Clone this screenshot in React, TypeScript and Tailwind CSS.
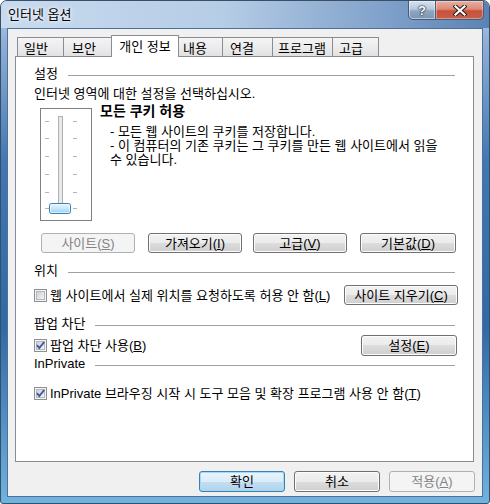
import React from "react";

type Kind = "normal" | "primary" | "disabled";

function Button({
  children,
  kind = "normal",
  className = "",
}: {
  children: React.ReactNode;
  kind?: Kind;
  className?: string;
}) {
  const look: Record<Kind, string> = {
    normal:
      "border-[#707070] bg-[linear-gradient(#f2f2f2,#ebebeb_50%,#dddddd_50%,#cfcfcf)] text-black shadow-[inset_0_0_0_1px_#fcfcfc]",
    primary:
      "border-[#3c7fb1] bg-[linear-gradient(#eaf4fb,#dcecf8_50%,#c4def2_50%,#b2d3ec)] text-black shadow-[inset_0_0_0_1px_#9fdcf5]",
    disabled: "border-[#adb2b5] bg-[#f4f4f4] text-[#838383]",
  };
  return (
    <div
      className={`flex items-center justify-center rounded-[3px] border ${look[kind]} ${className}`}
    >
      {children}
    </div>
  );
}

function Checkbox({ checked = false }: { checked?: boolean }) {
  return (
    <svg width="13" height="13" viewBox="0 0 13 13" className="shrink-0">
      <defs>
        <linearGradient id="cbg" x1="0" y1="0" x2="1" y2="1">
          <stop offset="0" stopColor="#cbcfd5" />
          <stop offset="1" stopColor="#f6f6f6" />
        </linearGradient>
      </defs>
      <rect x="0.5" y="0.5" width="12" height="12" fill="#f4f4f4" stroke="#8e8f8f" />
      <rect x="2.5" y="2.5" width="8" height="8" fill="url(#cbg)" stroke="#b4b8bd" />
      {checked && (
        <path d="M3 6.2 L5.3 9 L10.2 3" fill="none" stroke="#3d5aa0" strokeWidth="1.9" />
      )}
    </svg>
  );
}

function GroupHeader({ label }: { label: string }) {
  return (
    <div className="flex items-center h-[15px]">
      <span>{label}</span>
      <div className="ml-[10px] mr-[3px] mt-[3px] h-px flex-1 bg-[#a0a0a0]" />
    </div>
  );
}

function PrivacySlider() {
  const ticks = [13, 30, 48, 66, 84, 100];
  return (
    <svg width="52" height="113" viewBox="0 0 52 113" className="shrink-0">
      <defs>
        <linearGradient id="thumb" x1="0" y1="0" x2="0" y2="1">
          <stop offset="0" stopColor="#e9f6fd" />
          <stop offset="0.5" stopColor="#c5e8fa" />
          <stop offset="1" stopColor="#8fd0f3" />
        </linearGradient>
      </defs>
      <rect
        x="0.5"
        y="0.5"
        width="51"
        height="112"
        fill="none"
        stroke="#000"
        strokeDasharray="1 1"
      />
      <rect x="18.5" y="8.5" width="4" height="90" fill="#e7eaea" stroke="#b0b0b0" />
      {ticks.map((y) => (
        <g key={y}>
          <line x1="5" y1={y + 0.5} x2="9" y2={y + 0.5} stroke="#b5b5b5" />
          <line x1="33" y1={y + 0.5} x2="37" y2={y + 0.5} stroke="#b5b5b5" />
        </g>
      ))}
      <rect
        x="9.5"
        y="95.5"
        width="21"
        height="10"
        rx="2"
        fill="url(#thumb)"
        stroke="#3c7fb1"
      />
      <rect x="10.5" y="96.5" width="19" height="8" rx="1" fill="none" stroke="#f4fbff" strokeOpacity="0.7" />
    </svg>
  );
}

function Tab({
  label,
  className,
}: {
  label: string;
  className: string;
}) {
  return (
    <div
      className={`flex h-[19px] items-center border border-b-0 border-[#898c95] bg-[linear-gradient(#f4f4f4,#ececec_50%,#e1e1e1)] pt-[2px] ${className}`}
    >
      {label}
    </div>
  );
}

export default function App() {
  return (
    <div className="w-[490px] h-[504px] [font-family:'Liberation_Sans','Noto_Sans_CJK_KR',sans-serif] text-[13px] leading-[15px] text-black">
      <div className="flex h-full w-full flex-col rounded-t-[7px] rounded-b-[3px] border border-[#3b4e66] bg-[linear-gradient(180deg,#b9cfe7_0px,#8fb0d6_40px,#3f78b3_160px,#2f6aa6_65%,#6fb3e0_100%)] px-[6px] pb-[6px]">
        {/* title bar */}
        <div className="-mx-[6px] flex h-[27px] items-start rounded-t-[6px] bg-[linear-gradient(90deg,#c8daee_0%,#b6cde6_45%,#7d9fc9_80%,#5a83b5_100%)] pl-[7px] pr-[5px]">
          <span className="self-center [text-shadow:0_0_6px_#fff,0_0_3px_#fff]">
            인터넷 옵션
          </span>
          <div className="ml-auto flex h-[19px]">
            <div className="flex w-[28px] items-center justify-center rounded-bl-[5px] border border-t-0 border-[#4a5c78] bg-[linear-gradient(#d6e2ef,#b6c8dc_45%,#8fa6c2_55%,#7d96b4)] shadow-[inset_0_0_0_1px_rgba(255,255,255,0.45)]">
              <span className="text-[13px] font-bold leading-none text-white [text-shadow:0_0_1px_#1c2a40,0_0_1px_#1c2a40,0_0_2px_#1c2a40]">
                ?
              </span>
            </div>
            <div className="flex w-[48px] items-center justify-center rounded-br-[5px] border border-l-0 border-t-0 border-[#4a5c78] bg-[linear-gradient(#eab0a3,#dc8a77_45%,#c8503a_55%,#c6604a)] shadow-[inset_0_0_0_1px_rgba(255,255,255,0.35)]">
              <svg width="14" height="11" viewBox="0 0 14 11">
                <path d="M2.5 1.5 L11.5 9.5 M11.5 1.5 L2.5 9.5" stroke="#2a1a1a" strokeWidth="4.2" strokeLinecap="square" />
                <path d="M2.5 1.5 L11.5 9.5 M11.5 1.5 L2.5 9.5" stroke="#fff" strokeWidth="2.2" strokeLinecap="square" />
              </svg>
            </div>
          </div>
        </div>

        {/* client area */}
        <div className="flex flex-1 flex-col border border-[#4f6f95] bg-[#f0f0f0]">
          {/* tabs */}
          <div className="mt-[6px] flex h-[21px] items-end pl-[9px]">
            <Tab label="일반" className="w-[47px] pl-[6px]" />
            <Tab label="보안" className="-ml-px w-[50px] pl-[8px]" />
            <div className="relative z-10 -mb-px -ml-[2px] flex h-[22px] w-[68px] items-center justify-center border border-b-0 border-[#898c95] bg-white">
              개인 정보
            </div>
            <Tab label="내용" className="-ml-px w-[45px] pl-[4px]" />
            <Tab label="연결" className="-ml-px w-[51px] pl-[7px]" />
            <Tab label="프로그램" className="-ml-px w-[61px] pl-[5px]" />
            <Tab label="고급" className="-ml-px w-[47px] pl-[6px]" />
          </div>

          {/* panel */}
          <div className="ml-[7px] flex h-[406px] w-[459px] flex-col border border-[#898c95] bg-white pl-[18px] pr-[15px] pt-[9px]">
            <GroupHeader label="설정" />
            <div className="mt-[5px]">인터넷 영역에 대한 설정을 선택하십시오.</div>

            <div className="mt-[3px] flex">
              <div className="ml-[6px] mt-[4px]">
                <PrivacySlider />
              </div>
              <div className="ml-[8px] flex flex-col">
                <div className="text-[14px] font-bold">모든 쿠키 허용</div>
                <div className="mt-[6px] pl-[10px] leading-[14px]">
                  <div>- 모든 웹 사이트의 쿠키를 저장합니다.</div>
                  <div>
                    - 이 컴퓨터의 기존 쿠키는 그 쿠키를 만든 웹 사이트에서 읽을
                  </div>
                  <div>수 있습니다.</div>
                </div>
              </div>
            </div>

            <div className="mt-[12px] flex h-[20px]">
              <Button kind="disabled" className="ml-[7px] w-[94px]">
                사이트(<u>S</u>)
              </Button>
              <Button className="ml-[13px] w-[94px]">
                가져오기(<u>I</u>)
              </Button>
              <Button className="ml-[11px] w-[94px]">
                고급(<u>V</u>)
              </Button>
              <Button className="ml-[13px] w-[96px]">
                기본값(<u>D</u>)
              </Button>
            </div>

            <div className="mt-[10px]">
              <GroupHeader label="위치" />
            </div>
            <div className="mt-[7px] flex h-[20px] items-center">
              <Checkbox />
              <span className="ml-[3px]">
                웹 사이트에서 실제 위치를 요청하도록 허용 안 함(<u>L</u>)
              </span>
              <Button className="ml-auto h-full w-[114px]">
                사이트 지우기(<u>C</u>)
              </Button>
            </div>

            <div className="mt-[11px]">
              <GroupHeader label="팝업 차단" />
            </div>
            <div className="mt-[4px] flex h-[21px] items-center">
              <Checkbox checked />
              <span className="ml-[3px]">
                팝업 차단 사용(<u>B</u>)
              </span>
              <Button className="ml-auto mr-[1px] h-full w-[96px]">
                설정(<u>E</u>)
              </Button>
            </div>

            <GroupHeader label="InPrivate" />
            <div className="mt-[15px] flex h-[15px] items-center">
              <Checkbox checked />
              <span className="ml-[3px]">
                InPrivate 브라우징 시작 시 도구 모음 및 확장 프로그램 사용 안 함(<u>T</u>)
              </span>
            </div>
          </div>

          {/* dialog buttons */}
          <div className="mt-[9px] flex h-[21px] justify-end gap-[9px] pr-[7px]">
            <Button kind="primary" className="w-[86px]">
              확인
            </Button>
            <Button className="w-[86px]">취소</Button>
            <Button kind="disabled" className="w-[86px]">
              적용(<u>A</u>)
            </Button>
          </div>
        </div>
      </div>
    </div>
  );
}
